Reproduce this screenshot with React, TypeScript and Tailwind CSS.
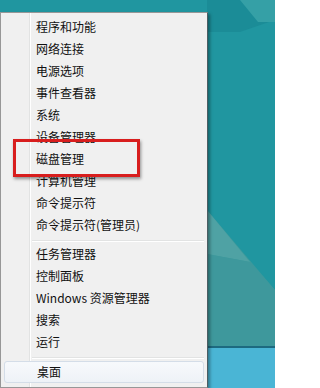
import React from "react";

type Entry = { label: string } | { sep: true };

const entries: Entry[] = [
  { label: "程序和功能" },
  { label: "网络连接" },
  { label: "电源选项" },
  { label: "事件查看器" },
  { label: "系统" },
  { label: "设备管理器" },
  { label: "磁盘管理" },
  { label: "计算机管理" },
  { label: "命令提示符" },
  { label: "命令提示符(管理员)" },
  { sep: true },
  { label: "任务管理器" },
  { label: "控制面板" },
  { label: "Windows 资源管理器" },
  { label: "搜索" },
  { label: "运行" },
  { sep: true },
];

function Wallpaper() {
  // desktop art behind the menu
  return (
    <svg className="absolute inset-0" width="275" height="346" viewBox="0 0 275 346">
      <rect width="275" height="346" fill="#2096a0" />
      <polygon points="207,0 275,0 275,20 240,32 207,32" fill="#1b8c97" />
      <polygon points="240,0 275,0 275,22 258,22" fill="#35a0a6" />
      <polygon points="207,210 275,290 275,346 207,346" fill="#3c9a9c" />
      <polygon points="207,210 250,262 207,254" fill="#4fa2a4" />
      <polygon points="207,254 250,262 275,290 275,346 207,346" fill="#3e989c" />
    </svg>
  );
}

export default function App() {
  return (
    <div
      className="relative w-[275px] h-[388px] overflow-hidden flex flex-col"
      style={{ fontFamily: '"Noto Sans CJK SC", "Liberation Sans", sans-serif' }}
    >
      <div className="relative h-[346px] shrink-0">
        <Wallpaper />
      </div>
      <div className="h-[2px] bg-[#1d6a80]" />
      <div className="flex-1 bg-[#4ab5d5]" />

      {/* context menu (Win+X) */}
      <div className="absolute left-0 top-[12px] w-[208px] h-[376px] bg-[#f0f0f0] border border-[#979797] border-r-[#4d5d63] shadow-[2px_2px_3px_rgba(0,0,0,0.35)]">
        <div className="absolute left-[28px] top-0 bottom-0 w-[2px] border-l border-[#e2e3e3] border-r border-r-white" />
        <div className="relative pt-[3px] px-[2px]">
          {entries.map((e, i) =>
            "sep" in e ? (
              <div key={i} className="h-[7px] flex items-end pl-[29px] pr-[1px] pb-[1px]">
                <div className="w-full h-[2px] border-t border-[#e2e3e3] border-b border-b-white" />
              </div>
            ) : (
              <div
                key={i}
                className="h-[22px] flex items-center pl-[33px] text-[12px] leading-none text-[#111]"
              >
                {e.label}
              </div>
            )
          )}
          <div className="h-[22px] mt-[1px] mx-[1px] flex items-center pl-[32px] text-[12px] leading-none text-[#111] rounded-[3px] border border-[#d4dde8] bg-gradient-to-b from-[#f7f9fc] to-[#eef2f7]">
            桌面
          </div>
        </div>
        {/* red highlight box around 磁盘管理 */}
        <div className="absolute left-[12px] top-[126px] w-[127px] h-[38px] border-[3px] border-[#d81e1e] shadow-[1px_2px_3px_rgba(0,0,0,0.4)]" />
      </div>
    </div>
  );
}
